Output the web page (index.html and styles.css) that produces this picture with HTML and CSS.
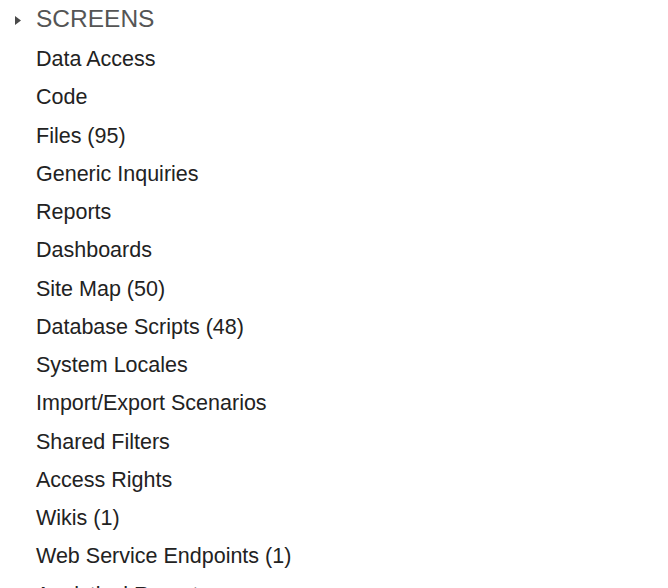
FILE: index.html
```html
<!DOCTYPE html>
<html>
<head>
<meta charset="utf-8">
<link rel="stylesheet" href="styles.css">
</head>
<body>
<div class="tree">
  <div class="header">
    <span class="caret"><svg width="6" height="9" viewBox="0 0 6 9"><path d="M0 0 L6 4.5 L0 9 Z" fill="#4a4a4a"/></svg></span>
    <span class="title">SCREENS</span>
  </div>
  <ul class="items">
    <li>Data Access</li>
    <li>Code</li>
    <li>Files (95)</li>
    <li>Generic Inquiries</li>
    <li>Reports</li>
    <li>Dashboards</li>
    <li>Site Map (50)</li>
    <li>Database Scripts (48)</li>
    <li>System Locales</li>
    <li>Import/Export Scenarios</li>
    <li>Shared Filters</li>
    <li>Access Rights</li>
    <li>Wikis (1)</li>
    <li>Web Service Endpoints (1)</li>
    <li>Analytical Reports</li>
  </ul>
</div>
</body>
</html>
```
FILE: styles.css
```css
html, body {
  margin: 0;
  padding: 0;
  background: #fff;
  overflow: hidden;
}
.tree {
  font-family: "Liberation Sans", Arial, sans-serif;
}
.header {
  display: flex;
  align-items: center;
  height: 38px;
  line-height: 38px;
}
.caret {
  display: flex;
  width: 36px;
  padding-left: 15px;
  box-sizing: border-box;
  margin-top: 2px;
}
.title {
  font-size: 24.5px;
  color: #555;
}
.items {
  list-style: none;
  margin: 2px 0 0;
  padding: 0 0 0 36px;
}
.items li {
  font-size: 21.5px;
  line-height: 38.25px;
  height: 38.25px;
  color: #222;
  white-space: nowrap;
}
```
